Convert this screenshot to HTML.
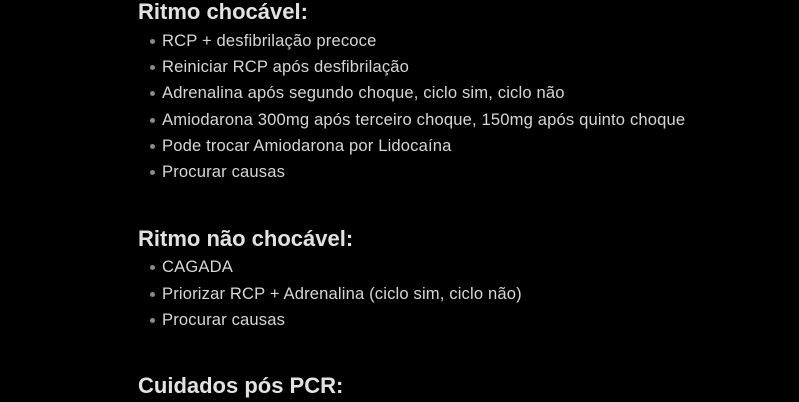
<!DOCTYPE html>
<html><head><meta charset="utf-8"><style>
html,body{margin:0;padding:0;background:#000;width:799px;height:402px;overflow:hidden}
body{font-family:"Liberation Sans",sans-serif;color:#d6d6d6;position:relative}
.h{position:absolute;left:138px;font-size:22px;font-weight:bold;color:#e2e2e2;line-height:26px;white-space:nowrap}
.i{position:absolute;left:162px;font-size:16.6px;letter-spacing:0.15px;line-height:20px;white-space:nowrap}
.i::before{content:"";position:absolute;left:-12px;top:8px;width:5px;height:5px;border-radius:50%;background:#8a8a8a}
</style></head><body>
<div class="h" style="top:-1px">Ritmo chocável:</div>
<div class="i" style="top:31px">RCP + desfibrilação precoce</div>
<div class="i" style="top:57px">Reiniciar RCP após desfibrilação</div>
<div class="i" style="top:83px">Adrenalina após segundo choque, ciclo sim, ciclo não</div>
<div class="i" style="top:110px">Amiodarona 300mg após terceiro choque, 150mg após quinto choque</div>
<div class="i" style="top:136px">Pode trocar Amiodarona por Lidocaína</div>
<div class="i" style="top:162px">Procurar causas</div>
<div class="h" style="top:226px">Ritmo não chocável:</div>
<div class="i" style="top:257px">CAGADA</div>
<div class="i" style="top:284px">Priorizar RCP + Adrenalina (ciclo sim, ciclo não)</div>
<div class="i" style="top:310px">Procurar causas</div>
<div class="h" style="top:373px">Cuidados pós PCR:</div>
</body></html>
